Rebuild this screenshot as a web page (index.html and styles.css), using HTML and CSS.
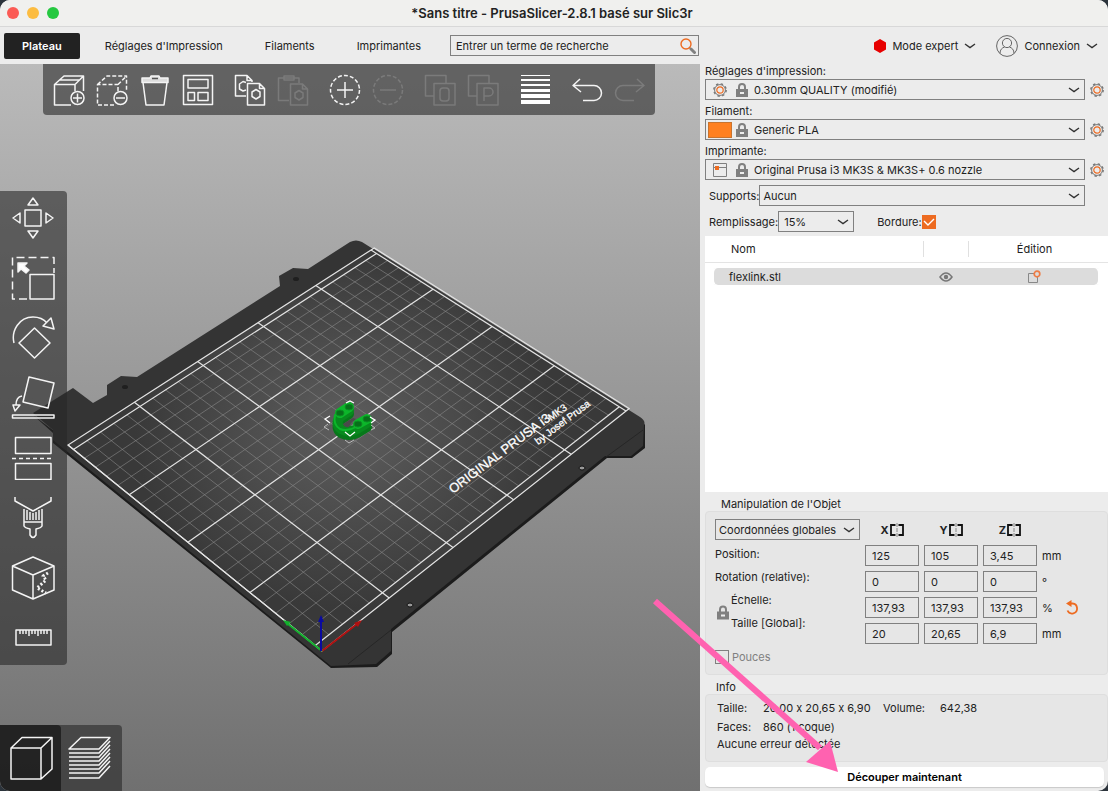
FILE: index.html
```html
<!DOCTYPE html>
<html lang="fr">
<head>
    <meta charset="UTF-8">
    <meta name="viewport" content="width=device-width, initial-scale=1.0">
    <title>*Sans titre - PrusaSlicer-2.8.1 basé sur Slic3r</title>
    <link rel="stylesheet" href="styles.css">
</head>
<body>
    <!-- Shared symbols -->
    <svg class="symbols" aria-hidden="true">
        <symbol id="lock" viewBox="0 0 12 14">
            <path d="M3 7V4a3 3 0 0 1 6 0v3" fill="none" stroke="#808080" stroke-width="2"/>
            <path d="M0 6h12v8H0z" fill="#808080"/>
            <path d="M4 10h4" stroke="#eee" stroke-width="2"/>
        </symbol>
        <symbol id="gear" viewBox="0 0 14 14">
            <circle cx="7" cy="7" r="5.4" fill="none" stroke="#777" stroke-width="1"/>
            <circle cx="7" cy="7" r="6.2" fill="none" stroke="#777" stroke-width="1.4" stroke-dasharray="2.4 2.47"/>
            <circle cx="7" cy="7" r="3.2" fill="none" stroke="#ed6b21" stroke-width="1.2"/>
        </symbol>
        <symbol id="mirror" viewBox="0 0 14 14">
            <path d="M5.500 2H1v10h4.500M8.500 2H13v10H8.500" fill="none" stroke="#111" stroke-width="1.8"/>
            <path d="M7 0v4M7 5v4M7 10v4" stroke="#888" stroke-width="1"/>
        </symbol>
        <symbol id="chevron" viewBox="0 0 12 6">
            <path d="M1 1l5 3.6L11 1" fill="none" stroke="#333" stroke-width="1.4"/>
        </symbol>
    </svg>

    <div class="window">
        <header class="title-bar">
            <div class="lights"><span class="light red"></span><span class="light yellow"></span><span class="light green"></span></div>
            <h1>*Sans titre - PrusaSlicer-2.8.1 basé sur Slic3r</h1>
        </header>

        <nav class="tab-bar">
            <button class="tab active">Plateau</button>
            <button class="tab">Réglages d'Impression</button>
            <button class="tab">Filaments</button>
            <button class="tab">Imprimantes</button>
            <div class="search">
                <input type="text" placeholder="Entrer un terme de recherche" aria-label="Recherche">
                <svg width="16" height="16" viewBox="0 0 16 16"><circle cx="6" cy="6" r="5" fill="none" stroke="#ed6b21" stroke-width="1.4"/><path d="M9.5 9.5l2 2" stroke="#ed6b21" stroke-width="1.4"/><path d="M11 11l3.5 3.5" stroke="#808080" stroke-width="3" stroke-linecap="round"/></svg>
            </div>
            <button class="menu-button mode">
                <svg width="12" height="14" viewBox="0 0 12 14"><path d="M6 0l6 3.5v7L6 14l-6-3.5v-7z" fill="#e70000"/></svg>
                Mode expert
                <svg width="12" height="6"><use href="#chevron"/></svg>
            </button>
            <button class="menu-button login">
                <svg width="22" height="22" viewBox="0 0 22 22" fill="none" stroke="#666" stroke-width="1"><circle cx="11" cy="11" r="10.4"/><circle cx="11" cy="8" r="4.6"/><path d="M4 18.5c0-4 2-5.5 4.5-6.5M18 18.5c0-4-2-5.5-4.5-6.5"/></svg>
                Connexion
                <svg width="12" height="6"><use href="#chevron"/></svg>
            </button>
        </nav>

        <main class="main">
            <section class="view">
                <svg class="scene" viewBox="0 64 700 727" preserveAspectRatio="xMidYMid slice">
                    <defs>
                        <radialGradient id="sheet" gradientUnits="userSpaceOnUse" cx="345" cy="430" r="210" gradientTransform="translate(0 64) scale(1 .85)">
                            <stop offset="0" stop-color="#5e5e5e"/>
                            <stop offset="1" stop-color="#393939"/>
                        </radialGradient>
                    </defs>
                    <!-- Heatbed plate -->
                    <path fill="#1c1c1c" d="M33 415L53 433V443L331 668L377 667L392 654V632L607 458H632L645 448V424L330 640Z"/>
                    <path fill="#343434" d="M33 413L73 388L93 403L107 395V385L121 376L137 377L280 286L279 276L293 268L308 269L350 242Q356 239 362 242L640 417Q646 421 644 425L643 446L631 456H605L391 629V651L376 664L331 666L53 440V430Z"/>
                    <path fill="none" stroke="#262626" d="M643 430L606 457M391 630L348 664"/>
                    <g fill="#1f1f1f"><ellipse cx="296" cy="279" rx="3" ry="2"/><ellipse cx="125" cy="387" rx="3" ry="2"/></g>
                    <g fill="#999" stroke="#111"><ellipse cx="582" cy="468" rx="3" ry="2"/><ellipse cx="410" cy="605" rx="3" ry="2"/></g>
                    <g id="bed"></g>
                    <g class="bed-text">
                        <text class="bed-name" transform="translate(453 494) rotate(-37)">ORIGINAL PRUSA i3</text>
                        <text class="bed-small" transform="translate(551 421) rotate(-36)">MK3</text>
                        <text class="bed-small" transform="translate(538 445) rotate(-37)">by Josef Prusa</text>
                    </g>
                    <!-- Object and its selection box -->
                    <g fill="none" stroke-linecap="round">
                        <path d="M349 414L340 420Q335 428 341 433Q349 437 357 433L367 427" stroke="#07781a" stroke-width="10"/>
                        <path d="M349 411L340 417Q335 424 341 429Q349 433 357 429L367 423" stroke="#088a1e" stroke-width="10"/>
                        <path d="M349 407L340 413" stroke="#0cb62a" stroke-width="10"/>
                        <path d="M335 415Q333 425 340 429Q347 432 356 427" stroke="#0cb62a" stroke-width="2"/>
                        <path d="M358 424L367 419" stroke="#0cb62a" stroke-width="10"/>
                    </g>
                    <path fill="#4a4a4a" d="M343 424L353 418L356 419L351 423L349 427Q345 428 343 424Z"/>
                    <g fill="#07701a" stroke="#0a8f22"><ellipse cx="340" cy="413" rx="4" ry="3"/><ellipse cx="349" cy="407" rx="4" ry="3"/><ellipse cx="358" cy="424" rx="4" ry="3"/><ellipse cx="367" cy="419" rx="4" ry="3"/></g>
                    <path fill="none" stroke="#fff" stroke-width="1.3" d="M330 416l-5 3 5 4M346 403l4-2 4 2M370 417l5 3-4 3M345 432l5 4 5-4"/>
                    <path fill="none" stroke="#bbb" d="M328 424l-4 3 5 3M371 425l4 3-4 2M345 440l4 3 5-3"/>
                    <!-- Axes -->
                    <g stroke-width="2"><path stroke="#b01010" d="M322 651L357 624"/><path stroke="#12b02c" d="M322 651L288 624"/><path stroke="#0a0aa0" d="M321 651V620"/></g>
                    <path fill="#b01010" d="M362 620l-8 3 4 4z"/><path fill="#12b02c" d="M283 620l8 2-4 4z"/><path fill="#0a0aa0" d="M321 615l3 7h-6z"/>
                </svg>

                <div class="toolbar top-tools">
                    <button aria-label="Ajouter"><svg viewBox="0 0 32 32"><path d="M18 31H1.500V10.500H22V17M1.500 10.500L11 2H30.500V17M22 10.500L30.500 2M6.500 6H26"/><circle cx="24.500" cy="24" r="6.500"/><path d="M24.500 19.500v9M20 24h9"/></svg></button>
                    <button aria-label="Supprimer"><svg viewBox="0 0 32 32"><path stroke-dasharray="4 2" d="M18 31H1.500V10.500H22V17M1.500 10.500L11 2H30.500V17M22 10.500L30.500 2"/><circle cx="24.500" cy="24" r="6.500"/><path d="M20 24h9"/></svg></button>
                    <button aria-label="Tout supprimer"><svg viewBox="0 0 32 32"><path d="M4 8.500L7 31H25L28 8.500"/><path class="lid" d="M3 4h8l1-2h8l1 2h8v4.500H3z"/><path class="slot" d="M13 4.500h6"/></svg></button>
                    <button aria-label="Agencer"><svg viewBox="0 0 32 32"><path d="M1.500 1.500h29v29h-29zM6 5.500h20v8.500H6zM6 18.500h6.500v8H6zM16 18.500h10v8H16z"/></svg></button>
                    <span class="gap"></span>
                    <button aria-label="Copier"><svg viewBox="0 0 32 32"><path d="M12 22H1.500V1.500H13l5 5V8M13 1.500V6.500h5M13.500 9.500h12l5 5V31h-17zM25.500 9.500v5h5M22 15.500l4 2.500v4.500l-4 2.500-4-2.500V18zM12 8.500l-3-1-3.500 2.500v5L9 17l3-1"/></svg></button>
                    <button disabled aria-label="Coller"><svg viewBox="0 0 32 32"><path d="M12 26.500H1.500V4H22v5M7 2h10v4H7zM13.500 10h12l5 5v16h-17zM25.500 10v5h5M22 16.500l4 2.500v4.500l-4 2.500-4-2.500V19z"/></svg></button>
                    <span class="gap"></span>
                    <button aria-label="Ajouter une instance"><svg viewBox="0 0 32 32"><circle cx="16" cy="16" r="14.500" stroke-dasharray="4 2.070"/><path d="M16 8v16M8 16h16"/></svg></button>
                    <button disabled aria-label="Retirer une instance"><svg viewBox="0 0 32 32"><circle cx="16" cy="16" r="14.500" stroke-dasharray="4 2.070"/><path d="M8 16h16"/></svg></button>
                    <span class="gap"></span>
                    <button disabled aria-label="Séparer en objets"><svg viewBox="0 0 32 32"><path d="M10 22H1.500V1.500H22V9M10 9.500h21V31H10z"/><rect x="16" y="14" width="9" height="13" rx="3"/></svg></button>
                    <button disabled aria-label="Séparer en pièces"><svg viewBox="0 0 32 32"><path d="M10 22H1.500V1.500H22V9M10 9.500h21V31H10zM17 27V14h5a3.500 3.500 0 0 1 0 8h-5"/></svg></button>
                    <span class="gap"></span>
                    <button aria-label="Hauteur de couche variable"><svg viewBox="0 0 32 32"><path class="bars" d="M2 1h29v1H2zM2 5h29v2H2zM2 10h29v2H2zM2 15h29v3H2zM2 20h29v4H2zM2 26h29v4H2z"/></svg></button>
                    <span class="gap"></span>
                    <button aria-label="Annuler"><svg viewBox="0 0 32 32"><path d="M9 5L2 11.500L10 18M2 11.500H23a7.500 7.500 0 0 1 0 15H12"/></svg></button>
                    <button disabled aria-label="Rétablir"><svg viewBox="0 0 32 32"><path d="M23 5l7 6.500L22 18M30 11.500H9a7.500 7.500 0 0 0 0 15h11"/></svg></button>
                </div>

                <div class="toolbar side-tools">
                    <button aria-label="Déplacer"><svg viewBox="0 0 44 44"><path d="M14 14h16v16H14zM22 2l5 7H17zM22 42l5-7H17zM2 22l7-5v10zM42 22l-7-5v10z"/></svg></button>
                    <button aria-label="Redimensionner"><svg viewBox="0 0 44 44"><path stroke-dasharray="8 4" d="M16 43H1.500V1.500H43V17"/><path d="M19 18.500h24V43H19z"/><path class="cursor" d="M7 7h9l-3 3 5 4-3 3-5-4-3 3z"/></svg></button>
                    <button aria-label="Tourner"><svg viewBox="0 0 44 44"><path d="M23.500 12L39 27L23.500 42L8 27zM3 27C0 15 8 1 22 1Q31 1 36 7M32 10l11 3-3-11z"/></svg></button>
                    <button aria-label="Poser sur une face"><svg viewBox="0 0 44 44"><path d="M18 1l25 6-6 25-25-6zM11 20Q5 21 5 29M2 29h7l-5 6zM1.500 39H43v3H1.500z"/></svg></button>
                    <button aria-label="Couper"><svg viewBox="0 0 44 44"><path d="M4.500 1.500H40v16H4.500zM4.500 27.500H40v16H4.500z"/><path stroke-dasharray="4 3" d="M1 22.500h41"/></svg></button>
                    <button aria-label="Peindre les supports"><svg viewBox="0 0 44 44"><path d="M4 1v4l18 10L40 5V1M13 13v13h18V13M13 25v5q1 2 6 3v6q3 5 6 0v-6q5-1 6-3v-5M16 14v10M19 16v8M22 17v7M25 16v8M28 14v10"/></svg></button>
                    <button aria-label="Peindre la jointure"><svg viewBox="0 0 44 44"><path d="M22 1L43 10V34L22 43L1.500 34V10zM1.500 10L22 19L43 10M22 19V43"/><path stroke-width="3" stroke-dasharray="2 2" d="M37 17l-5 3 3 4-9 8 9 5"/></svg></button>
                    <button aria-label="Mesurer"><svg viewBox="0 0 44 44"><path d="M5 14h35v15H5zM9 14v4M12 14v4M15 14v4M18 14v6M21 14v4M24 14v4M27 14v6M30 14v4M33 14v4M36 14v4"/></svg></button>
                </div>

                <div class="toolbar view-tools">
                    <button class="active" aria-label="Vue 3D"><svg viewBox="0 0 44 44"><path d="M2 12H32V43H2zM2 12L13 1.500H43V33L32 43M32 12L43 1.500"/></svg></button>
                    <button class="preview" aria-label="Aperçu"><svg viewBox="0 0 44 44"><path d="M1 13h30L42 1.500H13zM1 17h30L42 5M1 21h30L42 9M1 25h30L42 13M1 29h30L42 17M1 33h30L42 21M1 37h30L42 25M1 42h30L42 30"/></svg></button>
                </div>
            </section>

            <aside class="sidebar">
                <div class="presets">
                    <label for="print">Réglages d'impression:</label>
                    <div class="preset-row">
                        <div class="combo">
                            <svg class="combo-icon" width="14" height="14"><use href="#gear"/></svg>
                            <svg width="12" height="14"><use href="#lock"/></svg>
                            <select id="print"><option>0.30mm QUALITY (modifié)</option></select>
                        </div>
                        <button class="gear-button" aria-label="Modifier l'impression"><svg width="14" height="14"><use href="#gear"/></svg></button>
                    </div>
                    <label for="filament">Filament:</label>
                    <div class="preset-row">
                        <div class="combo">
                            <span class="combo-icon swatch"></span>
                            <svg width="12" height="14"><use href="#lock"/></svg>
                            <select id="filament"><option>Generic PLA</option></select>
                        </div>
                        <button class="gear-button" aria-label="Modifier le filament"><svg width="14" height="14"><use href="#gear"/></svg></button>
                    </div>
                    <label for="printer">Imprimante:</label>
                    <div class="preset-row">
                        <div class="combo">
                            <svg class="combo-icon" width="14" height="14" viewBox="0 0 14 14"><path d="M.5.500h13v13H.5zM0 4.500h14" fill="none" stroke="#808080"/><path d="M2 3h4v4H2z" fill="#ed6b21"/></svg>
                            <svg width="12" height="14"><use href="#lock"/></svg>
                            <select id="printer"><option>Original Prusa i3 MK3S &amp; MK3S+ 0.6 nozzle</option></select>
                        </div>
                        <button class="gear-button" aria-label="Modifier l'imprimante"><svg width="14" height="14"><use href="#gear"/></svg></button>
                    </div>
                    <div class="option-row supports">
                        <label for="supports">Supports:</label>
                        <select id="supports" class="boxed"><option>Aucun</option></select>
                    </div>
                    <div class="option-row">
                        <label for="infill">Remplissage:</label>
                        <select id="infill" class="boxed infill"><option>15%</option></select>
                        <label for="brim" class="brim-label">Bordure:</label>
                        <input type="checkbox" id="brim" class="brim" checked>
                    </div>
                </div>

                <div class="objects">
                    <table>
                        <thead>
                            <tr><th class="name">Nom</th><th class="eye"><span></span></th><th class="edit">Édition</th></tr>
                        </thead>
                        <tbody>
                            <tr>
                                <td class="name">flexlink.stl</td>
                                <td class="eye"><svg width="14" height="10" viewBox="0 0 14 10"><path d="M1 5q6-8 12 0q-6 8-12 0z" fill="none" stroke="#777" stroke-width="1.500"/><circle cx="7" cy="5" r="2.200" fill="#777"/></svg></td>
                                <td class="edit"><svg width="14" height="14" viewBox="0 0 14 14"><path d="M7 3.500H1.500v9h9V7" fill="none" stroke="#888"/><circle cx="10" cy="4" r="2.800" fill="none" stroke="#ee7c45" stroke-width="1.700"/></svg></td>
                            </tr>
                        </tbody>
                    </table>
                </div>

                <h2>Manipulation de l'Objet</h2>
                <section class="panel manipulation">
                    <div class="names">
                        <select class="boxed coords" aria-label="Coordonnées"><option>Coordonnées globales</option></select>
                        <span>Position:</span>
                        <span>Rotation (relative):</span>
                        <div class="locked">
                            <svg width="12" height="15"><use href="#lock"/></svg>
                            <div><span>Échelle:</span><span>Taille [Global]:</span></div>
                        </div>
                        <label class="inches"><input type="checkbox" disabled>Pouces</label>
                    </div>
                    <div class="fields">
                        <button class="axis">X<svg width="14" height="14"><use href="#mirror"/></svg></button>
                        <button class="axis">Y<svg width="14" height="14"><use href="#mirror"/></svg></button>
                        <button class="axis">Z<svg width="14" height="14"><use href="#mirror"/></svg></button>
                        <span></span><span></span>
                        <input value="125" aria-label="Position X"><input value="105" aria-label="Position Y"><input value="3,45" aria-label="Position Z"><span>mm</span><span></span>
                        <input value="0" aria-label="Rotation X"><input value="0" aria-label="Rotation Y"><input value="0" aria-label="Rotation Z"><span>°</span><span></span>
                        <input value="137,93" aria-label="Échelle X"><input value="137,93" aria-label="Échelle Y"><input value="137,93" aria-label="Échelle Z"><span>%</span>
                        <button class="reset" aria-label="Réinitialiser"><svg width="14" height="16" viewBox="0 0 14 16"><path d="M5 3.500h2.500a5 5 0 1 1-5 7" fill="none" stroke="#ed6b21" stroke-width="1.800"/><path d="M1 3.500L6.500 0v7z" fill="#ed6b21"/></svg></button>
                        <input value="20" aria-label="Taille X"><input value="20,65" aria-label="Taille Y"><input value="6,9" aria-label="Taille Z"><span>mm</span><span></span>
                    </div>
                </section>

                <h2 class="info-title">Info</h2>
                <section class="panel info">
                    <dl>
                        <dt>Taille:</dt><dd>20,00 x 20,65 x 6,90</dd><dt>Volume:</dt><dd>642,38</dd>
                        <dt>Faces:</dt><dd>860 (1 coque)</dd>
                    </dl>
                    <p>Aucune erreur détectée</p>
                </section>
                <button class="slice">Découper maintenant</button>
            </aside>
        </main>
        <svg class="pointer" width="186" height="174" viewBox="0 0 186 174"><path d="M3 3L168 150" stroke="#ff62b0" stroke-width="6"/><path d="M186 174L154 164L178 143Z" fill="#ff62b0"/></svg>
    </div>

    <script>
        const bed = document.getElementById('bed');
        // Screen corners of the printable area, front left first
        const [p0, p1, p2, p3] = [[322, 651], [626, 411], [371, 250], [68, 445]];

        // Projective mapping of the unit square to the corners
        const dx1 = p1[0] - p2[0], dx2 = p3[0] - p2[0], sx = p0[0] - p1[0] + p2[0] - p3[0];
        const dy1 = p1[1] - p2[1], dy2 = p3[1] - p2[1], sy = p0[1] - p1[1] + p2[1] - p3[1];
        const det = dx1 * dy2 - dx2 * dy1;
        const g = (sx * dy2 - dx2 * sy) / det;
        const h = (dx1 * sy - sx * dy1) / det;

        function project(x, y) {
            const u = x / 250, v = (y + 5) / 210;
            const w = g * u + h * v + 1;
            const px = (p1[0] - p0[0] + g * p1[0]) * u + (p3[0] - p0[0] + h * p3[0]) * v + p0[0];
            const py = (p1[1] - p0[1] + g * p1[1]) * u + (p3[1] - p0[1] + h * p3[1]) * v + p0[1];
            return (px / w).toFixed(2) + ' ' + (py / w).toFixed(2);
        }

        function draw(className, points) {
            const path = document.createElementNS('http://www.w3.org/2000/svg', 'path');
            path.setAttribute('class', className);
            path.setAttribute('d', 'M' + points.map(p => project(p[0], p[1])).join('L'));
            bed.appendChild(path);
        }

        draw('bed-sheet', [[0, -5], [252, -5], [252, 205], [0, 205]]);
        for (let x = 10; x < 250; x += 10) if (x % 50) draw('bed-minor', [[x, 0], [x, 200]]);
        for (let y = 10; y < 200; y += 10) if (y % 50) draw('bed-minor', [[0, y], [250, y]]);
        for (let x = 0; x <= 250; x += 50) draw('bed-major', [[x, -5], [x, 205]]);
        for (let y = 0; y <= 200; y += 50) draw('bed-major', [[0, y], [250, y]]);
        draw('bed-major', [[0, -5], [253, -5], [253, 205], [0, 205], [0, -5]]);
    </script>
</body>
</html>
```
FILE: styles.css
```css
* {
    margin: 0;
    padding: 0;
    box-sizing: border-box;
}

body {
    background-color: #2c343c;
    font-family: Inter, "Liberation Sans", sans-serif;
    font-size: 11px;
    font-feature-settings: "calt" 0;
    line-height: 14px;
    color: #222;
}

button, input, select {
    font: inherit;
    color: inherit;
    background: none;
    border: none;
}

svg {
    display: block;
}

.symbols {
    display: none;
}

.window {
    position: relative;
    display: flex;
    flex-direction: column;
    min-height: 100vh;
    border-radius: 10px;
    overflow: hidden;
    background-color: #ececec;
}

/* Title and tabs */
.title-bar {
    display: flex;
    align-items: center;
    height: 27px;
    padding: 0 7px 1px;
    background-color: #f0f0ee;
    border-bottom: 1px solid #d8d8d8;
}

.title-bar h1 {
    flex: 1;
    padding-right: 58px;
    font-size: 13px;
    font-weight: 600;
    text-align: center;
}

.lights {
    display: flex;
    gap: 8px;
    width: 54px;
}

.light {
    width: 12px;
    height: 12px;
    border-radius: 50%;
}

.red {
    background-color: #fb5b55;
}

.yellow {
    background-color: #fcbc40;
}

.green {
    background-color: #25c840;
}

.tab-bar {
    display: flex;
    align-items: center;
    height: 37px;
    padding: 0 10px 0 4px;
}

.tab {
    height: 26px;
    padding: 0 21px;
    border-radius: 2px;
    white-space: nowrap;
}

.tab.active {
    padding: 0 18px;
    margin-right: 4px;
    background-color: #222;
    color: white;
    font-weight: 600;
}

.search {
    display: flex;
    align-items: center;
    width: 249px;
    height: 21px;
    margin-left: 8px;
    padding: 0 2px 0 5px;
    border: 1px solid #808080;
}

.search input {
    flex: 1;
    min-width: 0;
    outline: none;
}

.search input::placeholder {
    color: #222;
}

.menu-button {
    display: flex;
    align-items: center;
    gap: 6px;
    white-space: nowrap;
}

.mode {
    margin-left: auto;
}

.login {
    margin-left: 20px;
}

/* 3D view */
.main {
    flex: 1;
    display: flex;
}

.view {
    position: relative;
    flex: 1;
    min-width: 0;
    overflow: hidden;
    background: linear-gradient(#bababa, #707070);
}

.scene {
    position: absolute;
    width: 100%;
    height: 100%;
}

.bed-sheet {
    fill: url(#sheet);
}

.bed-minor {
    fill: none;
    stroke: #888;
    stroke-width: 1;
    stroke-opacity: 0.6;
}

.bed-major {
    fill: none;
    stroke: #e4e4e4;
    stroke-width: 1.2;
}

.bed-text {
    fill: white;
    stroke: white;
    stroke-width: 0.3;
    font-family: "Liberation Sans", sans-serif;
}

.bed-name {
    font-size: 13px;
}

.bed-small {
    font-size: 10px;
}

.toolbar {
    position: absolute;
    display: flex;
    background-color: rgba(40, 40, 40, 0.6);
}

.toolbar button {
    display: flex;
    align-items: center;
    justify-content: center;
}

.toolbar svg {
    fill: none;
    stroke: #f4f4f4;
    stroke-width: 1.5;
    stroke-linejoin: round;
}

.toolbar .cursor {
    fill: #fff;
}

.toolbar .lid {
    fill: #ddd;
}

.toolbar .slot {
    stroke: #555;
}

.toolbar .bars {
    fill: #fff;
    stroke: none;
}

.toolbar button:disabled {
    opacity: 0.17;
}

.top-tools {
    top: 0;
    left: 43px;
    padding: 0 4px;
    border-radius: 0 0 4px 4px;
}

.top-tools button {
    width: 43px;
    height: 51px;
}

.top-tools svg {
    width: 32px;
    height: 32px;
}

.gap {
    width: 9px;
}

.side-tools {
    top: 127px;
    left: 0;
    flex-direction: column;
    gap: 6px;
    padding-right: 1px;
    border-radius: 0 4px 4px 0;
}

.side-tools button {
    width: 66px;
    height: 54px;
}

.side-tools svg, .view-tools svg {
    width: 44px;
    height: 44px;
}

.view-tools {
    bottom: 0;
    left: 0;
    border-radius: 0 4px 0 0;
}

.view-tools button {
    width: 61px;
    height: 66px;
}

.view-tools .active {
    background-color: rgba(20, 20, 20, 0.7);
    border-radius: 0 4px 0 0;
}

.view-tools .preview {
    padding-right: 4px;
}

/* Sidebar */
.sidebar {
    flex: 0 0 408px;
    display: flex;
    flex-direction: column;
    padding: 0 0 4px 5px;
}

.presets label {
    display: block;
}

.preset-row {
    display: flex;
    align-items: center;
    gap: 5px;
    padding-right: 4px;
    margin: 1px 0 4px;
}

.combo {
    flex: 1;
    display: flex;
    align-items: center;
    height: 21px;
    border: 1px solid #808080;
}

.combo-icon {
    margin: 0 9px 0 7px;
}

.swatch {
    width: 24px;
    height: 16px;
    margin: 0 4px 0 2px;
    background-color: #ff8020;
    border: 1px solid #c8742f;
}

select {
    appearance: none;
    outline: none;
    background: url("data:image/svg+xml,%3Csvg xmlns='http://www.w3.org/2000/svg' width='12' height='6'%3E%3Cpath d='M1 1l5 3.6L11 1' fill='none' stroke='%23333' stroke-width='1.4'/%3E%3C/svg%3E") no-repeat right 4px center;
}

.combo select {
    flex: 1;
    height: 19px;
    padding-left: 6px;
}

.gear-button {
    width: 14px;
    height: 14px;
}

.boxed {
    height: 21px;
    padding-left: 3px;
    border: 1px solid #808080;
}

.option-row {
    display: flex;
    align-items: center;
    padding-left: 4px;
    margin-bottom: 4px;
}

.supports {
    padding-right: 23px;
    margin: 5px 0;
}

.supports select {
    flex: 1;
}

.infill {
    width: 76px;
    padding-left: 5px;
}

.presets .brim-label {
    margin-left: 23px;
}

.brim {
    appearance: none;
    width: 14px;
    height: 14px;
    background: #ed6b21 url("data:image/svg+xml,%3Csvg xmlns='http://www.w3.org/2000/svg' width='14' height='14'%3E%3Cpath d='M2 6l4 4 6-6' fill='none' stroke='white' stroke-width='1.4'/%3E%3C/svg%3E");
}

.objects {
    flex: 1;
    background-color: white;
}

.objects table {
    width: 100%;
    border-collapse: separate;
    border-spacing: 0;
    table-layout: fixed;
}

.objects th {
    height: 27px;
    border-bottom: 1px solid #e4e4e4;
    font-weight: normal;
}

.objects tbody::before {
    content: "";
    display: block;
    height: 5px;
}

.objects .name {
    text-align: left;
    padding-left: 26px;
}

.objects .eye {
    width: 46px;
}

.objects th.eye span {
    display: block;
    height: 16px;
    border: solid #e0e0e0;
    border-width: 0 1px;
}

.objects .edit {
    width: 139px;
    text-align: center;
}

.objects th.edit {
    padding-right: 8px;
}

.objects td {
    height: 17px;
    background-color: #dcdcdc;
}

.objects td svg {
    margin: 0 auto;
}

.objects td.name {
    padding-left: 15px;
    border-left: 9px solid white;
    border-radius: 13px 0 0 13px / 5px 0 0 5px;
}

.objects td.edit {
    border-right: 10px solid white;
    border-radius: 0 14px 14px 0 / 0 5px 5px 0;
}

.sidebar h2 {
    padding: 5px 0 0 16px;
    font-size: 11px;
    font-weight: normal;
}

.sidebar .info-title {
    padding-left: 11px;
}

.panel {
    background-color: #e6e6e6;
    border: 1px solid #dedede;
    border-radius: 4px;
}

.manipulation {
    display: flex;
    padding: 7px 0 10px 9px;
}

.names {
    display: flex;
    flex-direction: column;
    flex: 0 0 150px;
}

.coords {
    width: 145px;
    margin-bottom: 3px;
}

.names span {
    display: block;
    line-height: 23px;
}

.locked {
    display: flex;
    align-items: center;
    gap: 2px;
    padding-left: 2px;
}

.inches {
    display: flex;
    align-items: center;
    gap: 3px;
    margin-top: 15px;
    color: #808080;
}

.inches input {
    appearance: none;
    width: 14px;
    height: 14px;
    border: 1px solid #808080;
}

.fields {
    display: grid;
    grid-template-columns: 54px 54px 54px 18px 14px;
    grid-auto-rows: 21px;
    gap: 5px;
    align-items: center;
}

.fields input {
    width: 100%;
    height: 21px;
    padding-left: 6px;
    border: 1px solid #808080;
}

.axis {
    display: flex;
    align-items: center;
    justify-content: center;
    gap: 1px;
    font-weight: bold;
}

.info {
    padding: 6px 11px 10px;
}

.info dl {
    display: grid;
    grid-template-columns: 46px 120px 57px 1fr;
    row-gap: 5px;
}

.info p {
    padding-top: 3px;
}

.slice {
    height: 20px;
    margin: 5px 4px 0 0;
    background-color: white;
    border-radius: 5px;
    box-shadow: 0 1px 1px rgba(0, 0, 0, 0.15);
    color: #000;
    font-weight: 600;
}

/* Arrow pointing at the slice button */
.pointer {
    position: absolute;
    right: 270px;
    bottom: 19px;
    pointer-events: none;
}
```
